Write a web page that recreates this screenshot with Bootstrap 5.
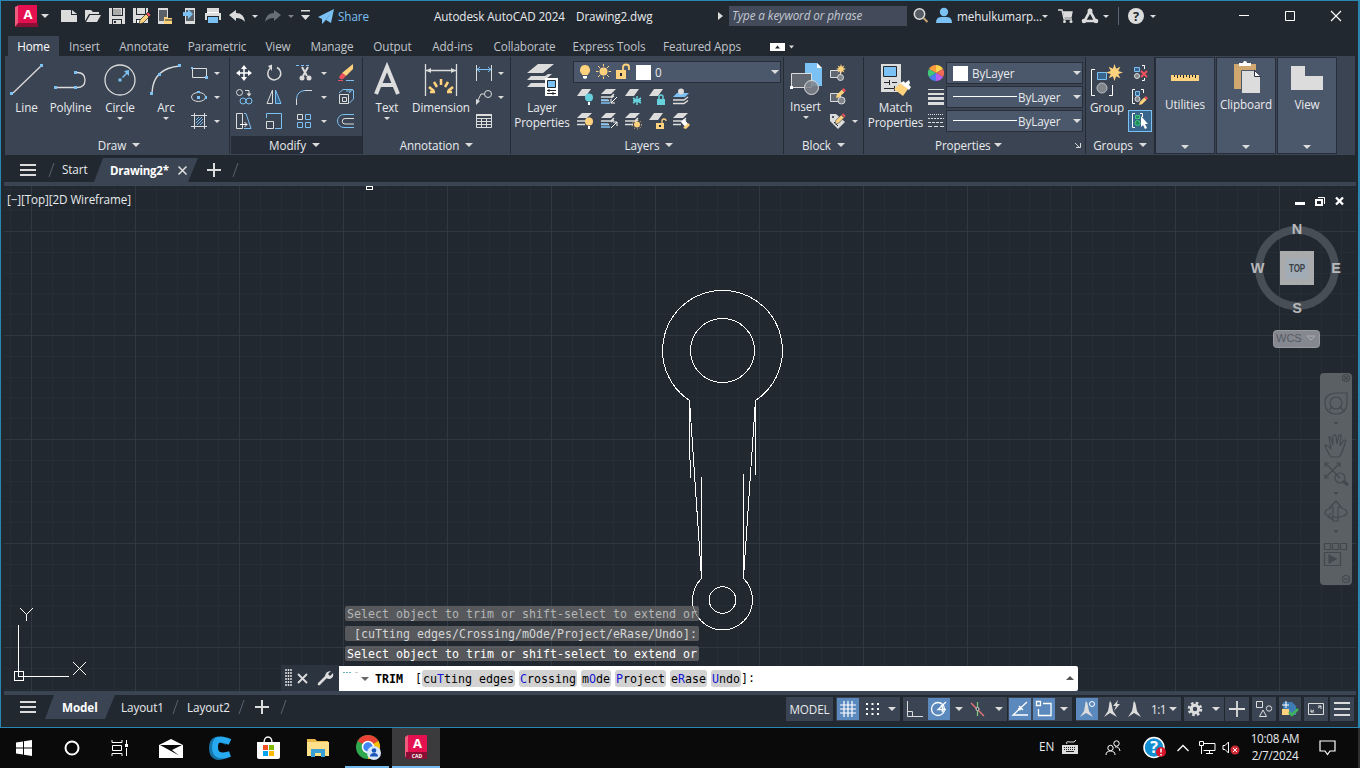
<!DOCTYPE html>
<html lang="en">
<head>
<meta charset="utf-8">
<title>Autodesk AutoCAD 2024 - Drawing2.dwg</title>
<link href="https://cdn.jsdelivr.net/npm/bootstrap@5.3.0/dist/css/bootstrap.min.css" rel="stylesheet">
<style>
:root{--ink:#212830;--pane:#3b4453;--light:#dcdcdc;--blue:#7cc1f4;--gold:#ffd27d}
body{width:1360px;height:768px;overflow:hidden;background:#0b0b0b;font-family:"Open Sans","Noto Sans",sans-serif;font-size:11.7px;line-height:15px;color:#e8eaed;letter-spacing:-.1px}
svg{display:block;flex:none;overflow:visible}
.tracks{display:grid;align-items:center;white-space:nowrap}
.app-win{height:728px;border:1px solid #2a86b0;border-right-width:2px;background:var(--ink);width:1360px}
/* svg paint */
.g{fill:var(--light)}.b{fill:var(--blue)}.y{fill:var(--gold)}.w{fill:#fff}.c{fill:#66d0dc}.k{fill:var(--ink)}.r{fill:#f0505c}
.sg,.sb,.sw,.sy,.sk{fill:none;stroke:var(--light)}.sb{stroke:var(--blue)}.sw{stroke:#fff}.sy{stroke:var(--gold)}.sk{stroke:var(--ink)}
/* carets */
.dn,.dl{width:0;height:0;border:3px solid transparent;border-top:3.5px solid #dcdcdc;border-bottom:0;justify-self:center;flex:none}
.dl{border-width:4.5px 4.5px 0}
/* title */
.title-row{height:30px;padding-left:14px;grid-template-columns:24px 18px repeat(8,24px) 12px 24px 12px 20px 18px 99px 142px 140px 13px 178px 6px 23px 21px 83px 10px 32px 18px 11px 17px 22px 85px 46px 46px 30px}
.search-in{height:20px;background:#434b5b;color:#c4c9d0;font-style:italic;padding:2px 3px}
/* menu */
.menu-row{height:25px;padding:5px 0 0 7px;color:#c0c4ca}
.menu-row>span{height:20px;line-height:20px;text-align:center;flex:none}
.menu-row .on{background:var(--pane);color:#fff}
/* ribbon */
.ribbon{height:99px;margin:0 3px 0 4px;background:var(--pane)}
.pane{border-right:1px solid #242b35;height:97px;margin-top:1px;flex:none}
.tools{height:79px;padding-top:4px}
.pane-name{height:18px;gap:6px;line-height:16px}
.big{flex:none;text-align:center;display:flex;flex-direction:column;align-items:center}
.big svg{margin-top:3px}
.big span{line-height:15px;margin-top:4px}
.big .dn{margin-top:2px;border-width:3px 3px 0}
.small-grid{display:grid;grid-auto-rows:24px;align-items:center;align-content:start}
.combo{height:22px;background:#4b576a;border:1px solid #272e39;width:137px}
.swatch{width:15px;height:15px;background:#fff;flex:none}
.fold{width:60px;height:97px;background:#4b576a;border:1px solid #272e39;margin-right:1px;flex:none;margin-top:1px}
/* document tabs */
.doc-row{height:27px;grid-template-columns:44px 17px 32px 104px 32px 20px}
.cant{clip-path:polygon(9px 0,100% 0,calc(100% - 10px) 100%,0 100%);background:var(--pane);font-weight:700;color:#fff}
.strip{height:4px;background:var(--pane);margin:0 2px 0 3px}
.stage{height:505px;margin:0 2px 0 3px;position:relative}
.view-name{position:absolute;left:3px;top:6px}
.over{position:absolute}
.burger{width:16px;height:12px;border-top:2px solid #dcdcdc;border-bottom:2px solid #dcdcdc;background:linear-gradient(#dcdcdc,#dcdcdc) 0 3px/16px 2px no-repeat;margin:2px 0 0 19px}
/* command line */
.mono{font-family:"DejaVu Sans Mono","Liberation Mono",monospace;font-size:11.63px;letter-spacing:0;white-space:pre}
.hist{left:341px;top:420px;gap:5px}
.hist div{width:354px;height:15px;line-height:17px;padding-left:2px;background:rgba(112,112,112,.68);border-radius:2px}
.cmd{left:277px;top:479px;height:26px;width:797px}
.grip{width:58px;background:#2c3440;grid-template-columns:14px 20px 24px}
.entry{flex:1;height:25px;background:#fff;color:#000;font-size:11.63px;border-radius:0 2px 2px 0}
.chip{background:#d2d2d2;border-radius:3px;height:17px;line-height:18px;margin-right:4px;text-align:center;flex:none}
.chip i{font-style:normal;color:#1414d8}
.nav-strip{left:1316px;top:187px;width:32px;height:212px;background:#5b6065;border-radius:4px}
/* layout + status */
.foot{height:31px}
.sheet-row{height:24px;grid-template-columns:44px 69px 56px 17px 49px 12px 33px 16px}
.stat{height:24px;margin-top:2px;background:var(--pane);flex:none}
.on-cell{background:#5b88bd}
.on-cell,.cell{width:22px;height:22px;flex:none;display:flex;align-items:center;justify-content:center}
/* taskbar */
.taskbar{height:40px;background:#0a0a0b}
.task{width:49px;height:40px;display:flex;align-items:center;justify-content:center;flex:none}
.task.run{border-bottom:2px solid #76b9ed}
.tray{grid-template-columns:23px 40px 40px 32px 20px 28px 22px 62px 35px 12px;margin-left:599px;height:40px}
</style>
</head>
<body>
<svg width="0" height="0" class="position-absolute">
<defs>
<symbol id="sheet" viewBox="0 0 14 7" overflow="visible"><path class="g" d="M5 0H14L9 7H0z"/></symbol>
<symbol id="stack" viewBox="0 0 24 24" overflow="visible"><path class="g" d="M9 4h10l-5 5H4z"/><path class="sg" stroke-width="1.500" d="M4 12h10l3-3M4 15.500h8M14 13l3-2"/></symbol>
<symbol id="star" viewBox="-8 -8 16 16" overflow="visible"><path class="y" d="M0-8 1.500-3.500 5.500-5.500 3.500-1.500 8 0 3.500 1.500 5.500 5.500 1.500 3.500 0 8-1.500 3.500-5.500 5.500-3.500 1.500-8 0-3.500-1.500-5.500-5.500-1.500-3.500z"/></symbol>
<symbol id="pencil" viewBox="0 0 12 12" overflow="visible"><path class="y" d="M0 12 1 8 7 2l3 3-6 6z"/><path class="r" d="M7 2 9 0l3 3-2 2z"/></symbol>
<symbol id="peak" viewBox="0 0 22 22" overflow="visible"><path class="g" d="M10 3q2 2 2 5l1 5 4 6-7-4-6 4 4-6 1-5q0-3 1-5z"/></symbol>
</defs>
</svg>

<div class="app-win">
<header class="tracks title-row">
 <svg width="24" height="24" viewBox="0 0 24 24"><path fill="#ef5b7d" d="M0 3 4 1v19l-4 3z"/><path fill="#e51050" d="M3 1h19v18H3z"/><path fill="#8a0f34" d="M3 19h20v4H0z"/><text x="13" y="15" text-anchor="middle" fill="#fff" font-size="13" font-weight="700" letter-spacing="0">A</text></svg>
 <i class="dl" style="justify-self:start;margin-left:2px"></i>
 <svg width="24" height="24" viewBox="0 0 24 24"><path class="g" d="M4 6h10v5h6v7H4z"/><path class="g" d="M15 6l5 4h-5z"/></svg>
 <svg width="24" height="24" viewBox="0 0 24 24"><path class="g" d="M4 6h6l2 2h6v2H8l-4 7z"/><path class="g" d="M9 11h11l-4 7H5z"/></svg>
 <svg width="24" height="24" viewBox="0 0 24 24"><path class="g" d="M4 4h16v16H4z"/><path class="k" d="M7 4h1v7h9V4h1v8H7zM7 15h10v5h-1v-4H8v4H7z"/><path fill="#aaa" d="M8 5h8v6H8z"/><path class="k" d="M9 17h2v2H9z"/></svg>
 <svg width="24" height="24" viewBox="0 0 24 24"><path class="g" d="M4 4h15v15H4z"/><path class="k" d="M7 4h1v6h8V4h1v7H7zM7 15h5v4H7z"/><path class="w" d="M8 16h3v3H8z"/><use href="#pencil" x="10" y="8" width="12" height="12" stroke="#212830" stroke-width=".7"/></svg>
 <svg width="24" height="24" viewBox="0 0 24 24"><path class="g" d="M5 4h10v16H5z"/><path fill="#5b6169" d="M6 6h8v11H6z"/><path class="y" d="M11 13h3l1 1h4v6h-8z"/><path class="sk" d="M12 16h7"/></svg>
 <svg width="24" height="24" viewBox="0 0 24 24"><path class="g" d="M8 4h10v16H8z"/><path fill="#5b6169" d="M9 6h8v11H9z"/><path class="b" d="M6 8h5V5l5 5-5 5v-3H6z"/></svg>
 <svg width="24" height="24" viewBox="0 0 24 24"><path class="g" d="M6 4h12v4H6zM4 9h16v7H4z"/><path class="k" d="M6 12h12v8H6z"/><path class="b" d="M7 13h10v6H7z"/><path class="sw" d="M6 8.500h12"/></svg>
 <svg width="24" height="24" viewBox="0 0 24 24"><path class="g" d="M4 11l7-5v3q8 0 9 9-3-4-9-4v3z"/></svg>
 <i class="dn"></i>
 <svg width="24" height="24" viewBox="0 0 24 24"><path fill="#686e76" d="M20 11l-7-5v3q-8 0-9 9 3-4 9-4v3z"/></svg>
 <i class="dn opacity-50"></i>
 <svg width="16" height="12"><path class="g" d="M4 0h9v1.500H4zM4 5h9l-4.500 5z"/></svg>
 <svg width="24" height="24" viewBox="4 0 24 24"><path class="b" d="M21 5 5 13l4 2zM21 5 9 15v5l3-3zM21 5l-8 11 5 3z"/></svg>
 <span style="color:#7cc1f4;padding-left:3px">Share</span>
 <span>Autodesk AutoCAD 2024</span>
 <span>Drawing2.dwg</span>
 <svg width="6" height="8" style="margin-left:2px"><path class="g" d="M0 0l5 4-5 4z"/></svg>
 <div class="search-in">Type a keyword or phrase</div><b></b>
 <svg width="18" height="18" viewBox="0 0 18 18"><circle cx="6.500" cy="7" r="5.200" fill="#555b63" stroke="#dcdcdc" stroke-width="1.500"/><path fill="none" stroke="#c9a978" stroke-width="1.800" d="M10.500 11l4 4"/></svg>
 <svg width="16" height="18" viewBox="0 0 16 18"><circle class="b" cx="8" cy="5" r="4.200"/><path class="b" d="M0 16q0-6 5-6h6q5 0 5 6z"/></svg>
 <span>mehulkumarp...</span>
 <i class="dn"></i>
 <svg width="16" height="16" style="margin-left:9px"><path class="sg" stroke-width="1.300" d="M-1 2h4l2 9h8M4 4h9l-1 5H5"/><path class="g" d="M4 4h9l-1 5H5z"/><circle class="g" cx="5.500" cy="13.500" r="1.500"/><circle class="g" cx="12" cy="13.500" r="1.500"/></svg>
 <svg width="16" height="16"><path class="sg" stroke-width="2.600" d="M8 3 2.500 13h11z"/><circle class="g" cx="8" cy="3" r="2.500"/><circle class="g" cx="2" cy="13" r="2.300"/><circle class="g" cx="14" cy="13" r="2.300"/></svg>
 <i class="dn"></i>
 <svg width="3" height="18" style="margin-left:6px"><path stroke="#596271" d="M1.500 0v18"/></svg>
 <svg width="18" height="18"><circle class="g" cx="8" cy="9" r="8"/><text x="8" y="13.500" text-anchor="middle" font-weight="700" font-size="13" fill="#212830">?</text></svg>
 <i class="dn" style="justify-self:start"></i>
 <svg width="12" height="12"><path class="sw" d="M4 5.500h10"/></svg>
 <svg width="12" height="12"><path class="sw" d="M4.500 1.500h9v9h-9z"/></svg>
 <svg width="12" height="12"><path class="sw" stroke-width="1.200" d="M4 1l10 10M14 1 4 11"/></svg>
</header>

<nav class="d-flex menu-row">
 <span class="on" style="width:51px">Home</span><span style="width:51px">Insert</span><span style="width:68px">Annotate</span><span style="width:78px">Parametric</span><span style="width:44px">View</span><span style="width:64px">Manage</span><span style="width:57px">Output</span><span style="width:63px">Add-ins</span><span style="width:81px">Collaborate</span><span style="width:88px">Express Tools</span><span style="width:98px">Featured Apps</span>
 <svg width="40" height="20" class="ms-3"><path class="w" d="M3 7h15v8H3z"/><path class="k" d="M8 12.500h5l-2.500-3z"/><path class="g" d="M22 9.500h5l-2.500 3z"/></svg>
</nav>

<main class="ribbon d-flex">
 <section class="pane" style="width:225px">
  <div class="tools d-flex">
   <div class="big" style="width:43px"><svg width="34" height="32"><path class="sg" stroke-width="1.300" d="M3 29 31 2"/><path class="b" d="M0 28h3v3H0zM30 0h3v3h-3z"/></svg><span>Line</span></div>
   <div class="big" style="width:45px"><svg width="34" height="32"><path class="sg" stroke-width="1.300" d="M3 23.500h18M21 8.500h2q8 0 8 7.500t-8 7.500h-2"/><path class="b" d="M0 22h3v3H0zM20 22h3v3h-3zM20 7h3v3h-3z"/></svg><span>Polyline</span></div>
   <div class="big" style="width:54px"><svg width="32" height="32"><circle class="sg" stroke-width="1.300" cx="16" cy="16" r="15"/><path class="b" d="M14.500 14.500h3v3h-3zM25 6v6l-2-2-4 4-1-1 4-4-2-2z"/></svg><span>Circle</span><i class="dn"></i></div>
   <div class="big" style="width:38px"><svg width="32" height="32"><path class="sg" stroke-width="1.300" d="M2 29Q3 4 30 2"/><path class="b" d="M0 28h3v3H0zM8 9h3v3H8zM28 0h3v3h-3z"/></svg><span>Arc</span><i class="dn"></i></div>
   <div class="small-grid" style="grid-template-columns:24px 12px;margin-left:2px">
    <svg width="24" height="24"><path class="sg" d="M5.500 7.500h14v9h-14z"/><path class="b" d="M4 6h2v2H4zM18 15h3v3h-3z"/></svg><i class="dn"></i>
    <svg width="24" height="24"><ellipse class="sg" cx="11.500" cy="12" rx="7" ry="4.500"/><path class="b" d="M10 11h3v3h-3zM10 6h3v2h-3zM18 11h2v3h-2z"/></svg><i class="dn"></i>
    <svg width="24" height="24"><path class="sg" d="M7.500 4v16M17.500 4v16M4 6.500h16M4 17.500h16"/><path class="sb" d="M9 11l3-3M9 14l6-6M10 16l6-6M13 16l3-3"/></svg><i class="dn"></i>
   </div>
  </div>
  <div class="pane-name d-flex justify-content-center align-items-center"><span class="ps-1">Draw</span><i class="dl"></i></div>
 </section>
 <section class="pane" style="width:133px">
  <div class="tools small-grid" style="grid-template-columns:30px 30px 26px 11px 1fr;padding-left:2px">
   <svg width="24" height="24"><path class="sw" stroke-width="1.500" d="M12 6v12M6 12h12"/><path class="w" d="M12 4l3 4H9zM12 20l3-4H9zM4 12l4-3v6zM20 12l-4-3v6z"/></svg>
   <svg width="24" height="24"><path class="sg" stroke-width="1.500" d="M15 6.500A6.500 6.500 0 1 1 8 7.500"/><path class="g" d="M10 3.500V10L6 5z"/></svg>
   <svg width="24" height="24"><path class="sb" stroke-dasharray="3 2" d="M4 4.500h15"/><path class="sg" stroke-width="2" d="M10 6l5 9M16 6l-5 9"/><circle class="g" cx="10" cy="17" r="2.500"/><circle class="g" cx="17" cy="17" r="2.500"/></svg><i class="dn"></i>
   <svg width="24" height="24" style="margin-left:5px"><path class="y" d="M19 3v5l-7 7-4-3z"/><path class="r" d="M8 12l4 3-3 3q-3 1-4-2z"/><path class="sb" d="M12 19.500h8"/><path stroke="#f0505c" d="M4 19.500h5"/></svg>
   <svg width="24" height="24"><circle class="sg" cx="7.500" cy="7.500" r="3"/><circle class="sb" cx="11" cy="16" r="3"/><circle class="sb" cx="17" cy="16" r="3"/><path class="sg" d="M13 5.500h4v4"/><path class="g" d="M14.500 8.500h5L17 11.500z"/></svg>
   <svg width="24" height="24"><path class="sg" d="M10.500 5v13.500H5z"/><path class="sb" fill="#39658d" style="fill:#39658d" d="M13.500 5v13.500H19z"/></svg>
   <svg width="24" height="24"><path class="sg" d="M13 5.500h7"/><path class="sb" d="M13 5.500Q5 6 4.500 14"/><path class="sg" d="M4.500 14v6"/></svg><i class="dn"></i>
   <svg width="24" height="24" style="margin-left:5px"><path class="sg" d="M5.500 9.500h9v9h-9zM8.500 12.500h4v4h-4z"/><path class="sb" d="M5 8l4-3.500h10L15 8M19.500 5v9l-4 4M12 6h5"/></svg>
   <svg width="24" height="24"><path class="sg" d="M4.500 4.500h6v15h-6z"/><path class="sb" d="M12 4.500h2l5 15h-7"/><path class="sw" d="M8 15.500h7M12.500 13l2.500 2.500-2.500 2.500"/></svg>
   <svg width="24" height="24"><path class="sb" d="M4.500 9V4.500h15v15H13"/><path class="sg" d="M4.500 12.500h7v7h-7z"/></svg>
   <svg width="24" height="24"><path class="sg" d="M5.500 5.500h5v5h-5z"/><path class="sb" d="M13.500 5.500h5v5h-5zM5.500 13.500h5v5h-5zM13.500 13.500h5v5h-5z"/></svg><i class="dn"></i>
   <svg width="24" height="24" style="margin-left:5px"><path class="sb" d="M20 5.500H10a6.500 6.500 0 0 0 0 13h10"/><path class="sg" d="M20 9.500H11a2.700 2.700 0 0 0 0 5.500h9"/></svg>
  </div>
  <div class="pane-name d-flex justify-content-center align-items-center pe-1" style="background:#272e39;margin-left:1px"><span>Modify</span><i class="dl"></i></div>
 </section>
 <section class="pane" style="width:148px">
  <div class="tools d-flex">
   <div class="big" style="width:48px"><svg width="32" height="32"><path fill="none" stroke="#dcdcdc" stroke-width="4" d="M5 30 16 3 27 30M8 21h16"/></svg><span>Text</span><i class="dn"></i></div>
   <div class="big" style="width:60px"><svg width="34" height="32"><path class="sg" stroke-width="1.300" d="M1.500 0v32M32.500 0v32M2 6.500h30"/><path class="g" d="M2 6.500 7 4v5zM32 6.500 27 4v5z"/><path class="sy" stroke-width="2.500" d="M17 15v6M10 18l3 5M24 18l-3 5M5 23l5 4M29 23l-5 4M6 28h5M23 28h5"/></svg><span>Dimension</span></div>
   <div class="small-grid" style="grid-template-columns:24px 10px;margin-left:1px">
    <svg width="24" height="24"><path class="sg" d="M4.500 4v16M19.500 4v16"/><path class="sb" d="M5 8.500h14M8 6l-3 2.500L8 11M16 6l3 2.500L16 11"/></svg><i class="dn"></i>
    <svg width="24" height="24"><circle class="sg" cx="16" cy="9" r="3.500"/><path class="sg" d="M12 9H9l-4 8"/><path class="g" d="M4 20V14l4 2z"/></svg><i class="dn"></i>
    <svg width="24" height="24"><path class="sg" d="M4.500 5.500h15v13h-15zM4 9.500h16M4 12.500h16M4 15.500h16M9.500 9v10M14.500 9v10"/><path class="g" d="M4 5h16v2H4z"/></svg>
   </div>
  </div>
  <div class="pane-name d-flex justify-content-center align-items-center"><span>Annotation</span><i class="dl"></i></div>
 </section>
 <section class="pane" style="width:273px">
  <div class="tools d-flex">
   <div class="big" style="width:62px"><svg width="32" height="32"><path class="g" d="M12 0h16L17 9H1zM5 12h14l3-2h4l-7 6H1zM5 19h14l2-2v6H1z"/><path class="w" d="M19 14h13v18H19z"/><path class="b" stroke="#212830" d="M21.500 16.500h8v7h-8z"/><path class="sk" d="M21 26.500h9M23 25v3M21 29.500h9M27 28v3"/></svg><span>Layer<br>Properties</span></div>
   <div>
    <div class="combo d-flex align-items-center" style="width:208px">
     <svg width="66" height="20"><path class="y" d="M11 3a5 5 0 0 1 3 9v1H8v-1a5 5 0 0 1 3-9z"/><path class="w" d="M9 14h4v2l-2 1-2-1z"/><circle class="y" cx="29.500" cy="9.500" r="4"/><path class="sy" d="M29.500 2v2.500M29.500 14.500V17M22 9.500h2.500M34.500 9.500H37M24 4l2 2M35 4l-2 2M24 15l2-2M35 15l-2-2"/><path class="y" d="M42 8h10v9H42z"/><path class="sy" stroke-width="1.800" d="M49 8V5q0-2.500 3-2.500T55 5v3"/><path class="k" d="M46 11h2v3h-2z"/></svg>
     <div class="swatch" style="margin-left:-4px"></div><span class="ms-1 flex-grow-1">0</span><i class="dl" style="margin-right:1px"></i>
    </div>
    <div class="small-grid" style="grid-template-columns:repeat(5,24px);margin-top:2px">
     <svg width="24" height="24"><use href="#sheet" x="4" y="4" width="14" height="7"/><circle class="c" cx="16" cy="12.500" r="4"/><path class="w" d="M15 17h2v3h-2z"/></svg>
     <svg width="24" height="24"><use href="#stack" width="24" height="24"/><path class="sb" stroke-width="1.500" d="M4 18h9M4 15h7"/><path class="sw" d="M20 12l-6 6M14 14v4h4"/></svg>
     <svg width="24" height="24"><use href="#sheet" x="4" y="4" width="14" height="7"/><path stroke="#66d0dc" stroke-width="1.500" d="M16 11v9M12 13l8 5M20 13l-8 5M12 15.500h8"/></svg>
     <svg width="24" height="24"><use href="#sheet" x="4" y="4" width="14" height="7"/><path class="c" d="M12 14h8v6h-8z"/><path fill="none" stroke="#66d0dc" stroke-width="1.500" d="M14 14v-2q0-2 2-2t2 2v2"/></svg>
     <svg width="24" height="24"><path class="b" d="M8 8h12l-4 4H4z"/><circle class="g" cx="12" cy="6.500" r="3"/><path class="sg" stroke-width="1.500" d="M4 15h11l4-3M4 18.500h11l4-3"/></svg>
     <svg width="24" height="24"><use href="#stack" width="24" height="24"/><circle class="y" cx="16" cy="12.500" r="4"/><path class="w" d="M15 17h2v3h-2z"/></svg>
     <svg width="24" height="24"><use href="#stack" width="24" height="24"/><path class="sb" stroke-width="1.500" d="M4 18h9M4 15h7"/><path class="sw" d="M14 19l6-6M16 13h4v4"/></svg>
     <svg width="24" height="24"><use href="#stack" width="24" height="24"/><circle class="y" cx="16" cy="15.500" r="3"/><circle class="sy" cx="16" cy="15.500" r="4.500" stroke-dasharray="1 2"/></svg>
     <svg width="24" height="24"><use href="#sheet" x="4" y="4" width="14" height="7"/><path class="y" d="M11 14h8v6h-8z"/><path class="sy" stroke-width="1.300" d="M17 14v-2q0-2 2-2t2 2"/><path class="k" d="M14 16h2v2h-2z"/></svg>
     <svg width="24" height="24"><use href="#stack" width="24" height="24"/><path class="w" d="M12 13l3-3 5 6-3 3z"/><path class="y" d="M14 19l5-5 2 2-4 4z"/></svg>
    </div>
   </div>
  </div>
  <div class="pane-name d-flex justify-content-center align-items-center ps-1"><span>Layers</span><i class="dl"></i></div>
 </section>
 <section class="pane" style="width:80px">
  <div class="tools d-flex">
   <div class="big" style="width:43px"><svg width="32" height="32" style="margin-top:2px"><path class="b" d="M15 0h12l5 5v18H15z"/><path class="w" d="M27 0l5 5h-5z"/><path fill="#626872" stroke="#dcdcdc" d="M1.500 10.500h20v14h-20z"/><circle fill="#80858c" fill-opacity=".85" stroke="#dcdcdc" cx="21.500" cy="24.500" r="7"/><path class="w" d="M0 23h3v3H0z"/></svg><span>Insert</span><i class="dn"></i></div>
   <div class="small-grid" style="grid-template-columns:24px 10px;margin-left:-1px">
    <svg width="24" height="24"><path fill="#626872" stroke="#dcdcdc" d="M4.500 9.500h10v7h-10z"/><circle fill="#80858c" stroke="#dcdcdc" cx="14.500" cy="16.500" r="3"/><use href="#star" x="10" y="3" width="10" height="10"/></svg><b></b>
    <svg width="24" height="24"><path fill="#626872" stroke="#dcdcdc" d="M4.500 8.500h10v8h-10z"/><circle fill="#80858c" stroke="#dcdcdc" cx="15.500" cy="15.500" r="3.500"/><use href="#pencil" x="10" y="3" width="10" height="10"/></svg><b></b>
    <svg width="24" height="24"><path class="g" d="M4 5h6l9 8-7 7-8-8z"/><circle class="k" cx="7" cy="8" r="1"/><path stroke="#212830" fill="none" d="M8 13l4 4"/><use href="#pencil" x="9" y="4" width="11" height="11" stroke="#3b4453" stroke-width=".7"/></svg><i class="dn"></i>
   </div>
  </div>
  <div class="pane-name d-flex justify-content-center align-items-center"><span>Block</span><i class="dl"></i></div>
 </section>
 <section class="pane" style="width:222px">
  <div class="tools d-flex">
   <div class="big" style="width:60px;padding-left:3px"><svg width="32" height="32"><path class="g" d="M1 0h20v28H1z"/><path class="b" stroke="#212830" d="M3.500 2.500h13v10h-13z"/><path class="sk" d="M4 18.500h5M12 18.500h5M9.500 16v5M4 24.500h11M14.500 22v5"/><path class="y" d="M14 25l7-6 7 6-5 7z"/><path class="w" d="M20 19l4-2 1 2 4-3 1 3-1 2 2 2-2 3z"/></svg><span>Match<br>Properties</span></div>
   <div class="small-grid" style="grid-template-columns:21px 138px;margin-left:1px">
    <svg width="21" height="24" viewBox="0 0 21 24"><g transform="translate(11 12)"><path fill="#ffd24d" d="M0 0V-8A8 8 0 0 1 7-4z"/><path fill="#ff9b3d" d="M0 0V-8A8 8 0 0 0-7-4z"/><path fill="#f06a55" d="M0 0-7-4A8 8 0 0 0-7 4z" transform="rotate(180)"/><path fill="#b95cf0" d="M0 0V8A8 8 0 0 0 7 4z"/><path fill="#4a7df0" d="M0 0V8A8 8 0 0 1-7 4z"/><path fill="#42c878" d="M0 0-7-4A8 8 0 0 0-7 4z"/></g></svg>
    <div class="combo d-flex align-items-center"><div class="swatch" style="margin-left:6px"></div><span class="ms-1 flex-grow-1">ByLayer</span><i class="dl" style="margin-right:1px"></i></div>
    <svg width="21" height="24"><path class="sg" d="M3 4.500h16"/><path class="g" d="M3 8h16v2H3zM3 12h16v3H3zM3 17h16v3H3z"/></svg>
    <div class="combo d-flex align-items-center"><svg width="71" height="2"><path class="w" d="M6 0h64v1H6z"/></svg><span class="flex-grow-1">ByLayer</span><i class="dl" style="margin-right:1px"></i></div>
    <svg width="21" height="24"><path class="sg" stroke-dasharray="1 1" d="M3 5.500h16"/><path class="sg" stroke-dasharray="2 1" d="M3 9.500h16"/><path class="sg" stroke-dasharray="3 1" d="M3 13.500h16"/><path class="sg" stroke-dasharray="4 2" d="M3 17.500h16"/></svg>
    <div class="combo d-flex align-items-center"><svg width="71" height="2"><path class="w" d="M6 0h64v1H6z"/></svg><span class="flex-grow-1">ByLayer</span><i class="dl" style="margin-right:1px"></i></div>
   </div>
  </div>
  <div class="pane-name d-flex align-items-center" style="padding-left:71px;gap:3px"><span>Properties</span><i class="dl"></i><svg width="6" height="6" style="margin-left:70px"><path class="sg" d="M0 1l4 4M1 5.500h4.500V1"/></svg></div>
 </section>
 <section class="pane" style="width:69px">
  <div class="tools d-flex">
   <div class="big" style="width:42px"><svg width="34" height="32"><path class="sw" d="M5 5.500H1.500v26H5M19 31.500h3.500V21"/><path fill="#39658d" stroke="#7cc1f4" d="M7.500 8.500h9v7h-9z"/><circle fill="#80858c" stroke="#b8bcc2" cx="12" cy="24" r="5"/><use href="#star" x="16" y="0" width="17" height="17"/></svg><span>Group</span></div>
   <div class="small-grid" style="grid-template-columns:24px">
    <svg width="24" height="24"><path fill="#39658d" stroke="#7cc1f4" d="M6.500 6.500h5v4h-5z"/><circle fill="#80858c" stroke="#dcdcdc" cx="9" cy="15" r="2.500"/><path class="sw" d="M14 4.500h2.500V8M14 19.500h2.500V17"/><path stroke="#f0505c" stroke-width="2" d="M13 10l6 6M19 10l-6 6"/></svg>
    <svg width="24" height="24"><path class="sw" d="M7 4.500H4.500v14H7M13 4.500h2.500V8"/><path fill="#39658d" stroke="#7cc1f4" d="M7.500 6.500h4v4h-4z"/><circle fill="#80858c" stroke="#dcdcdc" cx="9.500" cy="14" r="2.500"/><use href="#pencil" x="11" y="11" width="9" height="9"/></svg>
    <svg width="24" height="24"><rect x=".5" y="1.500" width="23" height="21" fill="#39658d" stroke="#7cc1f4"/><path class="sw" d="M7 4.500H4.500v14H7M12 4.500h2.500V8"/><path fill="#1f8a5b" stroke="#42c878" d="M7.500 6.500h4v3h-4z"/><circle fill="#1f8a5b" stroke="#42c878" cx="9.500" cy="14" r="2.500"/><path class="w" d="M13 7v11l2-2 2 4 2-1-2-4h3z"/></svg>
   </div>
  </div>
  <div class="pane-name d-flex justify-content-center align-items-center"><span>Groups</span><i class="dl"></i></div>
 </section>
 <section class="fold d-flex flex-column align-items-center"><svg width="30" height="39"><path class="y" d="M1 17h28v6H1z"/><path class="sk" d="M4.500 17v2M7.500 17v3M10.500 17v2M13.500 17v3M16.500 17v2M19.500 17v3M22.500 17v2M25.500 17v3"/></svg><span>Utilities</span><i class="dl mt-auto mb-1"></i></section>
 <section class="fold d-flex flex-column align-items-center"><svg width="30" height="39"><path fill="#cfa76f" d="M3 6h22v25H3z"/><path class="w" d="M8 8V5h4q0-2 2-2t2 2h4v3z"/><path class="g" stroke="#4b576a" d="M10.500 12.500h14l5 5v18h-19z"/><path class="w" stroke="#273142" d="M23.500 12.500v6H30z"/></svg><span>Clipboard</span><i class="dl mt-auto mb-1"></i></section>
 <section class="fold d-flex flex-column align-items-center"><svg width="32" height="39"><path class="g" d="M0 8h14v10h18v14H0z"/></svg><span>View</span><i class="dl mt-auto mb-1"></i></section>
</main>

<nav class="tracks doc-row">
 <div class="burger"></div>
 <svg width="12" height="16" viewBox="0 0 12 16"><path stroke="#596271" d="M4 16 9 2"/></svg>
 <span style="padding-top:2px">Start</span>
 <div class="cant d-flex align-items-center" style="height:24px;margin-top:3px;padding-left:16px;font-size:11.500px;letter-spacing:-.25px">Drawing2*<svg width="9" height="9" style="margin-left:9px"><path class="sg" stroke-width="1.600" d="M.5.500l8 8M8.500.500l-8 8"/></svg></div>
 <svg width="14" height="14" style="margin:3px 0 0 9px"><path class="sg" stroke-width="2" d="M7 0v14M0 7h14"/></svg>
 <svg width="12" height="16" style="margin-top:2px"><path stroke="#596271" d="M3 15 8 1"/></svg>
</nav>
<div class="strip"></div>

<div class="stage">
 <svg width="1352" height="505" viewBox="4 186 1352 505" style="overflow:hidden">
  <defs><pattern id="grid" x="31" y="231" width="104" height="104" patternUnits="userSpaceOnUse"><path stroke="#262d36" d="M21.500 0v104M42.500 0v104M62.500 0v104M83.500 0v104M0 21.500h104M0 42.500h104M0 62.500h104M0 83.500h104"/><path stroke="#303843" d="M.5 0v104M0 .500h104"/></pattern></defs>
  <path fill="url(#grid)" d="M4 186h1352v505H4z"/>
  <g fill="none" stroke="#fff" shape-rendering="crispEdges">
   <path d="M366.500 186.500h6v3h-6z"/>
   <path d="M689.500 400.500A60 60 0 1 1 755.500 400.500M701.500 578.500A30 30 0 1 0 743.500 578.500"/>
   <circle cx="722.500" cy="350.500" r="32"/><circle cx="722.500" cy="600" r="13.300"/>
   <path d="M689.500 400v40l1 38M689.500 400 701.500 578M701.500 477v101M755.500 400v75M755.500 400 743.500 578M743.500 474v104"/>
   <path d="M18.500 625v51.500H69M14.500 671.500h9v9h-9zM73 662l13 13M86 662l-13 13M20 608l6.500 6.500L33 608M26.500 614v7"/>
  </g>
 </svg>
 <div class="view-name">[−][Top][2D Wireframe]</div>
 <svg class="over" style="left:1291px;top:10px" width="46" height="11"><path class="w" d="M0 6h10v3H0z"/><path class="sw" stroke-width="2" d="M21 4h6v5h-6z"/><path class="sw" d="M23 1.500h6.500V8"/><path class="sw" stroke-width="2.400" d="M41 1.500l7 7M48 1.500l-7 7"/></svg>
 <svg class="over" style="left:1244px;top:34px" width="96" height="130" font-family="Liberation Sans, sans-serif">
  <circle cx="49" cy="48" r="38" fill="none" stroke="#474e56" stroke-width="8"/>
  <path fill="#a9aaac" d="M32 31h34v34H32z"/><path fill="#a2acb6" d="M38 38h22v21H38z"/>
  <text x="41" y="51.500" font-size="10" font-weight="700" fill="#3a4048" textLength="16" lengthAdjust="spacingAndGlyphs">TOP</text>
  <g font-size="14.500" font-weight="700" fill="#b7b9bb" text-anchor="middle"><text x="49" y="14">N</text><text x="49" y="93">S</text><text x="9.500" y="53">W</text><text x="88" y="53">E</text></g>
  <rect x="25.500" y="110.500" width="46" height="17" rx="3" fill="#85888f" stroke="#9799a3"/>
  <text x="28" y="122" font-size="11" fill="#565b66" letter-spacing="0">WCS</text><path fill="none" stroke="#a9abb3" d="M59 116h8l-4 4z"/>
 </svg>
 <div class="nav-strip over">
  <svg width="32" height="212" fill="none" stroke="#43484d" stroke-width="1.200">
   <circle cx="26" cy="5" r="3.500"/><path d="M24 3l4 4M28 3l-4 4"/>
   <path d="M16 20h11v11q-1 10-11 10T5 31t11-11z"/><circle cx="16" cy="30" r="6"/><path d="M9 37l3-3M20 34l4 4"/>
   <path fill="#43484d" stroke="none" d="M13.500 49h5l-2.500 3zM13.500 119h5l-2.500 3zM13.500 157h5l-2.500 3z"/>
   <path d="M11 84Q5 75 5 72q3 0 6 4L9 64q2-1 4 8l0-9q2-3 3 0l1 8 2-9q3-1 2 2l-1 9 4-6q3 0 1 3-3 11-6 14z"/>
   <path d="M5 90l15 15M20 90 5 105M5 94v-4h4M16 90h4v4M5 101v4h4"/><circle cx="20" cy="105" r="5"/><path stroke-width="3" d="M23 108l5 4"/>
   <path d="M13 148v-14h-3l6-6 5 6h-3v14zM11 135q-7 2-6 6 3 4 15 3 8-2 7-5-1-3-6-4M11 140l-3 4 5 3"/>
   <path d="M4.500 170.500h6v6h-6zM12.500 170.500h6v6h-6zM20.500 170.500h6v6h-6zM4.500 179.500h16v13h-16z"/><path fill="#43484d" d="M9 182v8l7-4z"/>
   <circle cx="26" cy="206" r="3.500"/><path d="M24 206h4"/>
  </svg>
 </div>
 <div class="hist over mono d-flex flex-column"><div style="color:#b4b6b8">Select object to trim or shift-select to extend or</div><div style="color:#d4d5d6"> [cuTting edges/Crossing/mOde/Project/eRase/Undo]:</div><div style="color:#fff">Select object to trim or shift-select to extend or</div></div>
 <div class="cmd over d-flex align-items-end">
  <div class="grip tracks h-100">
   <svg width="6" height="18" style="margin-left:4px"><path stroke="#dcdcdc" stroke-width="1.500" stroke-dasharray="2 1" d="M1 0v18M3.500 0v18M6 0v18"/></svg>
   <svg width="9" height="9" style="margin-left:3px"><path class="sg" stroke-width="1.800" d="M0 0l9 9M9 0 0 9"/></svg>
   <svg width="16" height="16" style="margin-left:3px"><path class="sg" stroke-width="2.600" stroke-linecap="round" d="M1 14l8-8"/><path class="g" d="M13 1l-3 3 2 2 3-3q1 4-2 5.500T7 7Q7 1 13 1z"/></svg>
  </div>
  <div class="entry mono d-flex align-items-center">
   <svg width="36" height="25"><path stroke="#6ab2bd" stroke-dasharray="2 1" d="M4 6.500h8"/><path stroke="#ccc" d="M16 6.500h3"/><path fill="#666" d="M22 11h8l-4 4z"/></svg><b style="line-height:17px;padding-top:2px">TRIM</b><span style="margin-left:12px">[</span><span class="chip" style="width:93px">cu<i>T</i>ting edges</span><span class="chip" style="width:58px"><i>C</i>rossing</span><span class="chip" style="width:30px">m<i>O</i>de</span><span class="chip" style="width:51px"><i>P</i>roject</span><span class="chip" style="width:37px">e<i>R</i>ase</span><span class="chip me-0" style="width:30px"><i>U</i>ndo</span><span>]:</span>
   <svg width="8" height="5" class="ms-auto me-1"><path fill="#555" d="M0 4h8L4 0z"/></svg>
  </div>
 </div>
</div>
<div class="strip"></div>

<footer class="foot d-flex">
 <div class="tracks sheet-row">
  <div class="burger" style="margin-top:0"></div>
  <div class="cant" style="height:24px;line-height:25px;padding-left:17px;width:70px">Model</div>
  <span style="padding:1px 0 0 7px">Layout1</span>
  <svg width="12" height="16"><path stroke="#596271" d="M3 15 8 1"/></svg>
  <span style="padding-top:1px">Layout2</span>
  <svg width="12" height="16"><path stroke="#596271" d="M3 15 8 1"/></svg>
  <svg width="14" height="14" style="margin-left:7px"><path class="sg" stroke-width="2" d="M7 0v14M0 7h14"/></svg>
  <svg width="12" height="16"><path stroke="#596271" d="M0 15 5 1"/></svg>
 </div>
 <div class="d-flex ms-auto" style="width:572px">
  <div class="stat text-center" style="width:47px;line-height:24px;margin-right:3px">MODEL</div>
  <div class="stat d-flex align-items-center" style="width:64px;margin-right:3px"><div class="on-cell" style="margin-left:1px"><svg width="16" height="16"><path class="sw" stroke-width="1.200" d="M4 0v16M8 0v16M12 0v16M0 4h16M0 8h16M0 12h16"/></svg></div><div class="cell" style="margin-left:2px"><svg width="14" height="14"><path stroke="#fff" stroke-width="2" stroke-dasharray="2 3.500" d="M1 2h13M1 7h13M1 12h13"/></svg></div><i class="dl" style="margin-left:5px"></i></div>
  <div class="stat d-flex align-items-center" style="width:104px;margin-right:1px"><div class="cell" style="margin-left:1px"><svg width="16" height="16"><path class="sg" d="M.5 0v15.500H16M.5 10.500h5v5"/></svg></div><div class="on-cell" style="margin-left:2px"><svg width="18" height="18"><circle class="sw" stroke-width="1.300" cx="8" cy="9" r="6.500"/><path class="sw" stroke-width="1.300" d="M16 2 8 9.500h8M11 5q3 3 1 7"/></svg></div><i class="dl" style="margin-left:5px"></i><svg width="20" height="18" style="margin-left:6px"><path stroke="#e77" stroke-width="1.200" d="M2 3l13 13"/><path stroke="#7cc47c" stroke-width="1.300" d="M8.500 2v14"/><circle fill="#212830" stroke="#dcdcdc" cx="8.500" cy="9" r="1.500"/></svg><i class="dl" style="margin-left:6px"></i></div>
  <div class="stat d-flex align-items-center" style="width:64px;margin-right:4px"><div class="on-cell" style="margin-left:1px"><svg width="16" height="16"><path class="sw" stroke-width="1.300" d="M15 1 1 14h15M7 5l4 4"/><circle class="w" cx="7.500" cy="8" r="1.500"/></svg></div><div class="on-cell" style="margin-left:2px"><svg width="18" height="18"><path class="sw" stroke-width="1.300" d="M8 3.500h8v12H3.500V9M1.500 1.500h4v4h-4z"/></svg></div><i class="dl" style="margin-left:5px"></i></div>
  <div class="stat d-flex align-items-center" style="width:105px;margin-right:3px"><div class="on-cell"><svg width="22" height="22"><use href="#peak" width="22" height="22"/><circle class="sw" cx="16" cy="6" r="2.500"/></svg></div><div class="cell ms-1" style="width:20px"><svg width="22" height="22"><use href="#peak" width="22" height="22" x="-1"/><path class="g" d="M17 2l-5 6h3l-2 5 6-7h-3z"/></svg></div><div class="cell" style="margin-left:3px"><svg width="22" height="22"><use href="#peak" width="22" height="22" x="-1"/></svg></div><span style="margin-left:4px;letter-spacing:-.5px">1:1</span><i class="dl" style="margin-left:3px"></i></div>
  <div class="stat d-flex align-items-center" style="width:40px;margin-right:1px"><svg width="18" height="18" style="margin-left:3px"><circle cx="8" cy="9" r="5.800" fill="none" stroke="#dcdcdc" stroke-width="3" stroke-dasharray="2.500 2.050"/><circle cx="8" cy="9" r="3.700" fill="none" stroke="#dcdcdc" stroke-width="3"/></svg><i class="dl" style="margin-left:7px"></i></div>
  <div class="stat d-flex align-items-center justify-content-center" style="width:24px;margin-right:3px"><svg width="16" height="16"><path class="sg" stroke-width="1.800" d="M8 0v16M0 8h16"/></svg></div>
  <div class="stat d-flex align-items-center justify-content-center" style="width:24px;margin-right:3px"><svg width="16" height="16"><path class="sg" d="M.5.500h6v6h-6zM7 9l3.500 6.500h-7z"/><circle class="sg" cx="13" cy="7.500" r="2.700"/></svg></div>
  <div class="stat d-flex align-items-center justify-content-center" style="width:22px;margin-right:3px"><svg width="16" height="16"><path fill="#3e7cb5" d="M1 1h9l4 4v9H1z"/><path class="sw" d="M4 0v7M0 4h7"/><path class="y" d="M0 8h7v6H0z"/><path fill="none" stroke="#42b35c" stroke-width="2.500" d="M7 11l3 3 6-6"/></svg></div>
  <div class="stat d-flex align-items-center justify-content-center" style="width:24px;margin-right:2px"><svg width="16" height="12"><path class="sg" d="M.5.500h15v11H.5zM3 9l3-2M3 6.500V9h3M13 3l-3 2M10 3h3v3"/></svg></div>
  <div class="stat d-flex align-items-center justify-content-center" style="width:24px"><svg width="16" height="14"><path class="sg" stroke-width="2" d="M0 1h16M0 7h16M0 13h16"/></svg></div>
 </div>
</footer>
</div>

<div class="taskbar d-flex">
 <div class="task" style="width:48px"><svg width="16" height="16"><path class="w" d="M0 2.500 7 1.500v6H0zM8 1.300 16 0v7.500H8zM0 8.500h7v6L0 13.500zM8 8.500h8V16L8 14.700z"/></svg></div>
 <div class="task" style="width:48px"><svg width="16" height="16"><circle class="sw" stroke-width="2" cx="8" cy="8" r="6.500"/></svg></div>
 <div class="task" style="width:48px"><svg width="18" height="16"><path class="sw" d="M1 0v2.500h10V0M1.500 5.500h9v5h-9zM1 16v-2.500h10V16M15.500 0v4M15.500 8v8"/><path class="w" d="M14 4h3v3h-3z"/></svg></div>
 <div class="task" style="width:54px"><svg width="24" height="19"><path class="w" d="M0 6 12 0l12 6v13H0z"/><path d="M1 6h22l-10 5 7 5.500z" fill="#0a0a0b"/></svg></div>
 <div class="task" style="width:43px"><svg width="24" height="22"><path fill="none" stroke="#1675a8" stroke-width="6" d="M19 5Q4-2 4 11t15 7"/><path fill="none" stroke="#28aaf0" stroke-width="6" d="M22 5Q7-2 7 10t15 7"/></svg></div>
 <div class="task ps-1"><svg width="24" height="24"><path class="sw" stroke-width="1.300" d="M8 7q0-6 4-6t4 6"/><path class="w" d="M1 6h23v15q0 2-2 2H3q-2 0-2-2z"/><path fill="#f25022" d="M7 9h5v5H7z"/><path fill="#7fba00" d="M13 9h5v5h-5z"/><path fill="#00a4ef" d="M7 15h5v5H7z"/><path fill="#ffb900" d="M13 15h5v5h-5z"/></svg></div>
 <div class="task" style="padding-left:6px"><svg width="22" height="20"><path fill="#e8b84a" d="M0 1h8l2 2h11v6H0z"/><path fill="#ffe08a" d="M0 4h22v14H0z"/><path fill="#3a9fd5" d="M4 19v-8h14v8h-4v-4H8v4z"/></svg></div>
 <div style="width:5px"></div>
 <div class="task run" style="width:48px;border-image:linear-gradient(90deg,#0a0a0b 3px,#76b9ed 3px 43px,#0a0a0b 43px) 2"><svg width="26" height="26"><circle cx="13" cy="13" r="12" fill="#2fa84f"/><path fill="#ea4335" d="M13 13 2.600 7A12 12 0 0 1 23.400 7z"/><path fill="#fbbc05" d="M13 13 23.400 7A12 12 0 0 1 13 25z"/><circle cx="13" cy="13" r="5.500" fill="#4285f4" stroke="#fff" stroke-width="1.500"/><circle cx="19" cy="19" r="7" fill="#d6e6fb"/><circle cx="19" cy="16.500" r="2.300" fill="#1a56b8"/><path fill="#1a56b8" d="M15 22.500q0-3.500 4-3.500t4 3.500z"/></svg></div>
 <div class="task run" style="background:#3b3b3d;width:48px"><svg width="23" height="24"><path fill="#ef5b7d" d="M0 2 3 0v20l-3 2z"/><path fill="#e51050" d="M3 0h19v17H3z"/><path fill="#8a0f34" d="M1 17h21v7H1z"/><text x="12.500" y="13" text-anchor="middle" font-weight="700" font-size="13" fill="#fff">A</text><text x="12" y="22.500" text-anchor="middle" font-weight="700" font-size="5" fill="#fff" letter-spacing="0">CAD</text></svg></div>
 <div class="tracks tray">
  <span style="margin-top:-4px">EN</span>
  <svg width="16" height="16" style="margin-top:-2px"><path class="sg" d="M5 5q-2-3 3-2t6-2"/><path class="g" d="M0 6h16v9H0z"/><path stroke="#222" stroke-dasharray="1 1" d="M2 8.500h12M2 10.500h12"/><path stroke="#222" d="M4 12.500h8"/></svg>
  <svg width="18" height="16" style="margin-left:3px"><circle class="sw" cx="11.500" cy="3.500" r="2.700"/><circle class="sw" cx="5.500" cy="8" r="2.700"/><path class="sw" d="M1 15q0-4 4.500-4t4.500 4M10 7q4-1 5 4"/></svg>
  <svg width="24" height="22" style="margin-left:1px"><circle cx="11" cy="10.500" r="10" fill="#128fd0" stroke="#fff" stroke-width="1.500"/><text x="11" y="16" text-anchor="middle" font-size="16" font-weight="700" fill="#fff">?</text><circle cx="18" cy="15" r="5" fill="#d8152b"/><path class="sw" stroke-width="1.500" d="M18 11.500v4M18 17v1.500"/></svg>
  <svg width="12" height="8" style="margin-left:3px"><path class="sw" stroke-width="1.300" d="M.5 7 6 1.500 11.500 7"/></svg>
  <svg width="18" height="14" style="margin-left:5px"><path class="sw" d="M5 2.500h11v7H4.500M.5.500h4v4h-4zM2.500 5v8M10.500 10v3M7 12.500h7"/></svg>
  <svg width="18" height="14"><path class="sw" d="M1 4.500h2L6.500 1v11L3 8.500H1z"/><circle cx="13" cy="9" r="4.500" fill="#d02a37"/><path class="sw" d="M11 7l4 4M15 7l-4 4"/></svg>
  <span class="text-center" style="line-height:17px;margin-top:-2px;letter-spacing:-.25px">10:08 AM<br>2/7/2024</span>
  <svg width="18" height="16" style="margin-left:13px"><path class="sw" stroke-width="1.200" d="M1 1h15v10H11l-2.500 3.500L6 11H1z"/></svg>
  <svg width="2" height="40" style="margin-left:17px"><path stroke="#555" d="M1 0v40"/></svg>
 </div>
</div>
<script src="https://cdn.jsdelivr.net/npm/bootstrap@5.3.0/dist/js/bootstrap.bundle.min.js"></script>
</body>
</html>
